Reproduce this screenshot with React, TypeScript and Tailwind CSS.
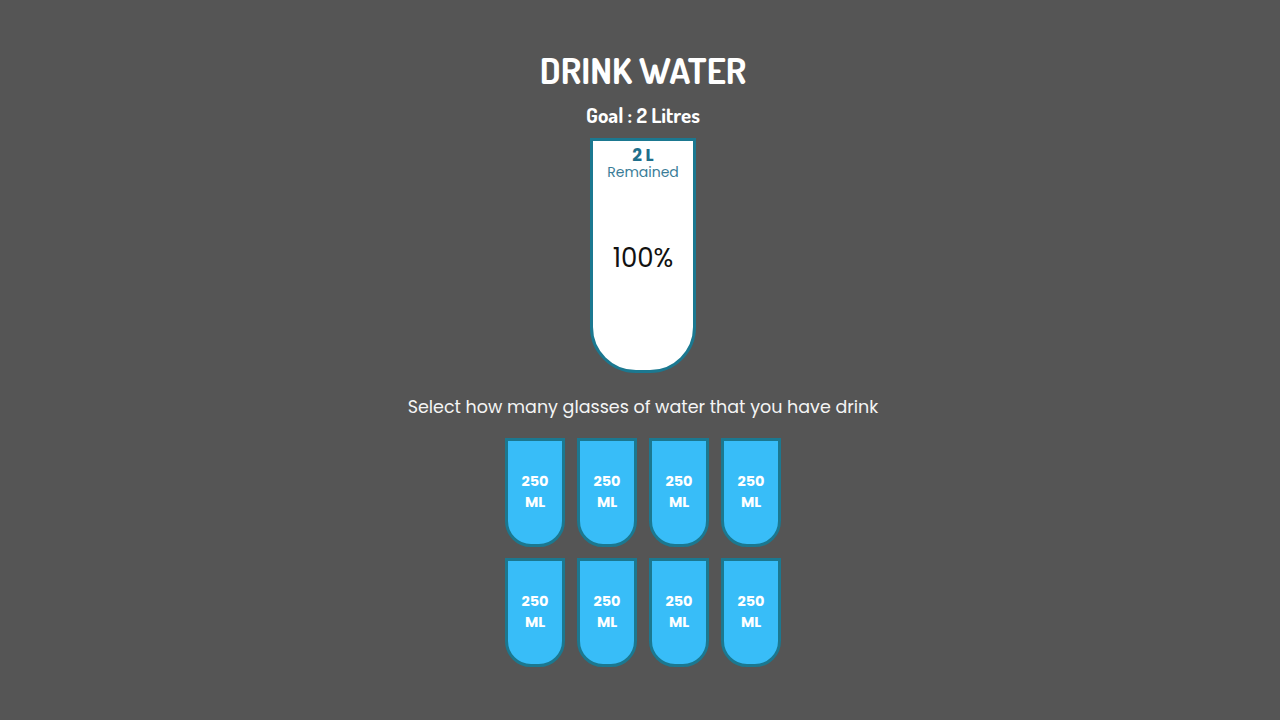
import React from "react";

const body = "'Poppins', 'Inter', 'Open Sans', sans-serif";
const title = "'Dosis', 'DejaVu Sans', 'Roboto', sans-serif";

function SmallCup() {
  return (
    <div className="w-[60px] h-[109px] bg-[#38bdf8] border-[3px] border-[#1b7890] rounded-b-[26px] flex flex-col items-center justify-center pb-[2px] text-white font-bold text-[14.5px] leading-[21px]">
      <div>250</div>
      <div>ML</div>
    </div>
  );
}

export default function App() {
  return (
    <div
      className="min-h-screen w-full bg-[#555555] flex flex-col items-center pt-[48px] pl-[6px] text-white"
      style={{ fontFamily: body }}
    >
      <h1 className="text-[36px] leading-[44px] font-bold" style={{ fontFamily: title }}>
        DRINK WATER
      </h1>
      <h3 className="mt-[10px] text-[21px] leading-[26px] font-bold" style={{ fontFamily: title }}>
        Goal : 2 Litres
      </h3>
      <div className="mt-[10px] w-[106px] h-[235px] bg-white border-[3px] border-[#1b7890] rounded-b-[46px] flex flex-col items-center">
        <div className="h-[44px] flex flex-col items-center pt-[6px]">
          <div className="text-[17px] leading-[17px] font-bold text-[#1f6f8b]">2 L</div>
          <div className="text-[14px] leading-[16px] text-[#3a7d98]">Remained</div>
        </div>
        <div className="flex-1 flex items-center justify-center pt-[6px] text-[26px] text-[#111111]">100%</div>
        <div className="h-[44px]" />
      </div>
      <p className="mt-[21px] text-[17.5px] leading-[26px] text-[#f4f4f4]">
        Select how many glasses of water that you have drink
      </p>
      <div className="mt-[18px] grid grid-cols-4 gap-x-[12px] gap-y-[11px]">
        {Array.from({ length: 8 }).map((_, i) => (
          <SmallCup key={i} />
        ))}
      </div>
    </div>
  );
}
